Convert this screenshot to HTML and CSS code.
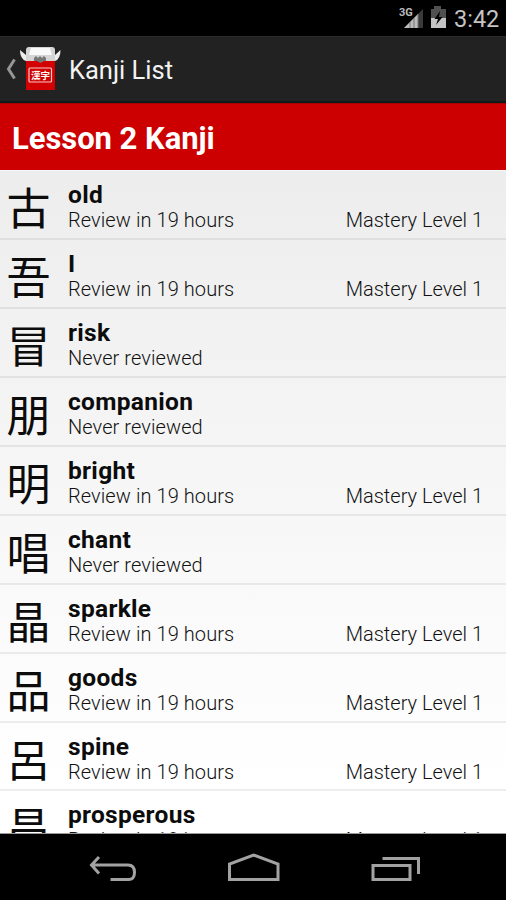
FILE: index.html
```html
<!DOCTYPE html>
<html lang="en">
<head>
<meta charset="utf-8">
<meta name="viewport" content="width=device-width, initial-scale=1">
<title>Kanji List</title>
<link rel="stylesheet" href="styles.css">
</head>
<body>
<div class="phone">
  <div class="status">
    <svg class="status-icons" width="50" height="26" viewBox="0 0 50 26">
      <path d="M5 22 L24 3 V22 Z" fill="#3a3a3a"/>
      <path d="M5 22 L19 8 V22 Z" fill="#bcbcbc"/>
      <path d="M11 16V22M15 12V22M19 8V22" stroke="#777" stroke-width="1"/>
      <text class="network" x="0" y="10">3G</text>
      <path d="M32 3H35V0H42V3H47V22H32Z" fill="#505050"/>
      <path d="M32 12H47V22H32Z" fill="#c4c4c4"/>
      <path d="M41 5L35.500 13H39L37 19L43.500 11H40Z" fill="#000"/>
    </svg>
    <span class="clock">3:42</span>
  </div>
  <header class="action-bar">
    <svg class="logo" width="62" height="66" viewBox="0 0 62 66">
      <path d="M14.500 23.500L8.500 33L14.500 42.500" fill="none" stroke="#969696" stroke-width="3"/>
      <path d="M20 14L26 19V25Q20 23 20 14Z" fill="#ededed"/>
      <path d="M60.500 14L55 19V25Q60.500 23 60.500 14Z" fill="#ededed"/>
      <path d="M29 11H52Q55 11 55 14V26H26V14Q26 11 29 11Z" fill="#d5d5d5"/>
      <path d="M31 12H50L52 19H29Z" fill="#fafafa"/>
      <path d="M34 22L36 20L38 22L40 20L42 22L44 20L46 22V25L43 27H38L34 25Z" fill="#777"/>
      <path d="M26 25H37L40.500 27L44 25H55V54H26Z" fill="#d20000"/>
      <rect x="29" y="32" width="22.500" height="14" rx="1" fill="none" stroke="#f5caca" stroke-width="1.200"/>
      <text class="logo-kanji" x="31" y="42.500">漢字</text>
    </svg>
    <h1 class="title">Kanji List</h1>
  </header>
  <h2 class="lesson"><span>Lesson 2 Kanji</span></h2>
  <main class="list">
    <div class="row"><span class="kanji">古</span><div class="info"><b>old</b><span>Review in 19 hours</span></div><span class="level">Mastery Level 1</span></div>
    <div class="row"><span class="kanji">吾</span><div class="info"><b>I</b><span>Review in 19 hours</span></div><span class="level">Mastery Level 1</span></div>
    <div class="row"><span class="kanji">冒</span><div class="info"><b>risk</b><span>Never reviewed</span></div></div>
    <div class="row"><span class="kanji">朋</span><div class="info"><b>companion</b><span>Never reviewed</span></div></div>
    <div class="row"><span class="kanji">明</span><div class="info"><b>bright</b><span>Review in 19 hours</span></div><span class="level">Mastery Level 1</span></div>
    <div class="row"><span class="kanji">唱</span><div class="info"><b>chant</b><span>Never reviewed</span></div></div>
    <div class="row"><span class="kanji">晶</span><div class="info"><b>sparkle</b><span>Review in 19 hours</span></div><span class="level">Mastery Level 1</span></div>
    <div class="row"><span class="kanji">品</span><div class="info"><b>goods</b><span>Review in 19 hours</span></div><span class="level">Mastery Level 1</span></div>
    <div class="row"><span class="kanji">呂</span><div class="info"><b>spine</b><span>Review in 19 hours</span></div><span class="level">Mastery Level 1</span></div>
    <div class="row"><span class="kanji">昌</span><div class="info"><b>prosperous</b><span>Review in 19 hours</span></div><span class="level">Mastery Level 1</span></div>
  </main>
  <nav class="navbar">
    <svg width="506" height="67" viewBox="0 0 506 67" fill="none" stroke="#a2a2a2" stroke-width="3">
      <path d="M99 23L91.500 31L99 39.500M92 31H128Q134.500 31 134.500 38.500T128 45.500H110.500"/>
      <path d="M229.500 45.500V30L253.500 21L278 30V45.500Z"/>
      <path d="M373 31.500H410V45.500H373ZM382.500 24.500H418.500V40"/>
    </svg>
  </nav>
</div>
</body>
</html>
```
FILE: styles.css
```css
* { box-sizing: border-box; }
body { margin: 0; background: #000; font-family: Roboto, "Noto Sans CJK JP", sans-serif; }
.phone { width: 506px; height: 900px; display: flex; flex-direction: column; overflow: hidden; }
.status { height: 36px; flex: none; background: #000; display: flex; align-items: flex-start; justify-content: flex-end; padding: 6px 8px 0 0; }
.status-icons { flex: none; margin-right: 5px; overflow: visible; }
.network { font-size: 11px; font-weight: 700; fill: #bbb; stroke: #000; stroke-width: 2px; paint-order: stroke; }
.clock { width: 44px; font-size: 23.500px; line-height: 26px; color: #c4c4c4; white-space: nowrap; }
.action-bar { height: 67px; flex: none; background: #222; border-top: 1px solid #2b2b2b; border-bottom: 2px solid #111a1b; display: flex; align-items: center; }
.logo { flex: none; }
.logo-kanji { font-family: "Noto Sans CJK JP", sans-serif; font-size: 9.500px; font-weight: 700; fill: #fff; }
.title { margin: 2px 0 0 7px; font-size: 25.500px; line-height: 30px; font-weight: 400; color: #f3f3f3; }
.lesson { height: 67px; flex: none; margin: 0; padding: 3px 12px 0; background: #c00; border-top: 1px solid #a90000; color: #fff; font-size: 31px; line-height: 64px; font-weight: 700; letter-spacing: -.05px; }
.list { height: 664px; flex: none; overflow: hidden; background: linear-gradient(#ededed, #fff 92%); border-top: 1px solid #f7f7f7; border-bottom: 1px solid #999; }
.row { height: 68.950px; display: flex; border-bottom: 2px solid rgba(0,0,0,.065); padding: 0 23px 0 6.500px; }
.kanji { width: 61.500px; flex: none; font-family: "Noto Sans CJK JP", sans-serif; font-weight: 400; font-size: 44px; line-height: 71px; color: #0c0c0c; }
.info { flex: 1; display: flex; flex-direction: column; padding-top: 10px; white-space: nowrap; }
.info b { font-size: 24.500px; line-height: 27px; font-weight: 700; letter-spacing: .3px; color: #0c0c0c; }
.info span, .level { font-size: 20px; line-height: 24.500px; font-weight: 300; letter-spacing: .08px; color: #111; }
.level { margin-top: 37px; white-space: nowrap; letter-spacing: 0; }
.navbar { height: 66px; flex: none; background: #000; }
```
